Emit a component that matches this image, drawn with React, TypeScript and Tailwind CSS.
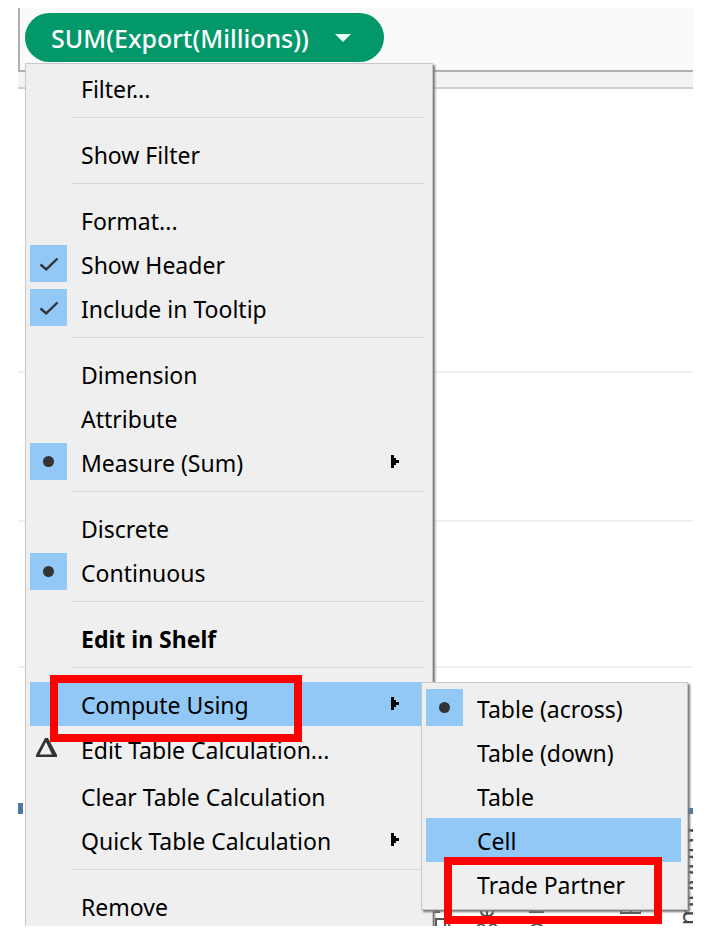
import { ReactNode } from "react";

type Mark = "check" | "dot" | "delta";

function MarkIcon({ mark }: { mark: Mark }) {
  if (mark === "delta") {
    return (
      <svg className="ml-1.5 mt-3 block h-5 w-[22px]" viewBox="0 0 22 20" aria-hidden="true">
        <path d="M0 19V17L9 0H12L21 17V19Z" fill="#333" />
        <path d="M3.5 16.5L10 4L16 16.5Z" fill="#efefef" />
      </svg>
    );
  }
  return (
    <span className="mt-[3px] flex size-[37px] items-center justify-center bg-[#91c8f6]">
      {mark === "dot" ? (
        <span className="size-[11px] rounded-full bg-[#333]" />
      ) : (
        <svg className="block h-[14px] w-5" viewBox="0 0 20 14" fill="none" aria-hidden="true">
          <path d="M1.5 7.5L7.2 12.3L18.5 1.5" stroke="#333" strokeWidth="2.4" />
        </svg>
      )}
    </span>
  );
}

function SubArrow() {
  return (
    <svg className="mr-[22px] mt-[15px] block h-[13px] w-2 shrink-0" viewBox="0 0 8 13" shapeRendering="crispEdges" aria-hidden="true">
      <path d="M0 0H3V3H5V5H8V8H5V10H3V13H0Z" fill="#000" />
    </svg>
  );
}

type ItemProps = {
  label: string;
  mark?: Mark;
  arrow?: boolean;
  active?: boolean;
  bold?: boolean;
  tall?: boolean;
  children?: ReactNode;
};

function Item({ label, mark, arrow, active, bold, tall, children }: ItemProps) {
  return (
    <li className="relative" role="none">
      <button
        type="button"
        role="menuitem"
        className={`flex w-full items-start text-left ${tall ? "h-12" : "h-11"} ${active ? "bg-[#91c8f6]" : ""}`}
      >
        <span className="w-[51px] shrink-0">{mark && <MarkIcon mark={mark} />}</span>
        <span
          className={`grow whitespace-nowrap text-[23px] leading-8 ${tall ? "pt-2" : "pt-[7px]"} ${bold ? "font-bold" : ""}`}
        >
          {label}
        </span>
        {arrow && <SubArrow />}
      </button>
      {children}
    </li>
  );
}

function Separator() {
  return (
    <li role="separator" className="flex h-[22px] items-start pl-[42px] pt-[7px]">
      <span className="-mr-1 h-px grow bg-[#d7d7d7]" />
    </li>
  );
}

function ComputeUsingMenu() {
  return (
    <ul
      role="menu"
      aria-label="Compute Using"
      className="absolute left-[391px] top-0 w-[267px] border border-[#c8c8c8] bg-[#efefef] py-[3px] pl-1 pr-1.5 shadow-[2px_2px_2px_#777]"
    >
      <Item label="Table (across)" mark="dot" />
      <Item label="Table (down)" />
      <Item label="Table" />
      <Item label="Cell" active />
      <Item label="Trade Partner">
        <span className="pointer-events-none absolute -top-[5px] left-[18px] h-[67px] w-[218px] border-8 border-[#fe0000]" />
      </Item>
    </ul>
  );
}

function PillMenu() {
  return (
    <ul
      role="menu"
      aria-label="Measure options"
      className="absolute left-[7px] top-[55px] w-[408px] border border-[#c8c8c8] bg-[#efefef] pb-1 pl-1 pr-[11px] pt-0.5 shadow-[2px_2px_2px_#777]"
    >
      <Item label="Filter..." />
      <Separator />
      <Item label="Show Filter" />
      <Separator />
      <Item label="Format..." />
      <Item label="Show Header" mark="check" />
      <Item label="Include in Tooltip" mark="check" />
      <Separator />
      <Item label="Dimension" />
      <Item label="Attribute" />
      <Item label="Measure (Sum)" mark="dot" arrow />
      <Separator />
      <Item label="Discrete" />
      <Item label="Continuous" mark="dot" />
      <Separator />
      <Item label="Edit in Shelf" bold />
      <Separator />
      <Item label="Compute Using" arrow active>
        <span className="pointer-events-none absolute -top-[7px] left-5 z-10 h-[67px] w-[252px] border-8 border-[#fe0000]" />
        <ComputeUsingMenu />
      </Item>
      <Item label="Edit Table Calculation..." mark="delta" tall />
      <Item label="Clear Table Calculation" />
      <Item label="Quick Table Calculation" arrow />
      <Separator />
      <Item label="Remove" />
    </ul>
  );
}

function AxisLabels() {
  return (
    <div className="flex min-h-0 grow items-start justify-end pt-[13px] text-[#444]">
      {/* Ends of the column headers that show below the open menus */}
      <svg
        className="mr-[34px] mt-[84px] block h-4 w-[210px] shrink-0"
        viewBox="0 0 210 16"
        fill="none"
        stroke="#555"
        strokeWidth="2"
        aria-hidden="true"
      >
        <path d="M0 1H9M2 1V16M5 16V8H14V16M18 16Q18 9 24 9M50 0Q50 5 56 5Q62 5 62 0M56 0V5M46 16Q50 10 54 16M58 16Q62 10 66 16M98 1H113M100 16Q106 10 112 16M190 0V2H200V0M200 2H210V0" />
      </svg>
      <span className="-mr-[6px] shrink-0 rotate-180 whitespace-nowrap text-[26px] leading-6 [writing-mode:vertical-rl]">
        Luxembourg
      </span>
    </div>
  );
}

export default function App() {
  return (
    <main className="flex h-screen flex-col bg-white pb-1 pl-[18px] pr-[27px] pt-2 font-['Noto_Sans','Open_Sans',sans-serif] text-black">
      <div className="relative flex min-h-0 grow flex-col overflow-hidden">
        <div className="h-16 shrink-0 border-b-2 border-l-2 border-[#b0b0b0] bg-[#fafafa] pl-[5px] pt-[5px]">
          <button type="button" className="flex h-[49px] w-[359px] items-center rounded-full bg-[#029869] pl-[26px] text-white">
            <span className="w-[284px] whitespace-nowrap text-left text-[25px] leading-8 font-medium">SUM(Export(Millions))</span>
            <svg className="block h-2 w-4" viewBox="0 0 16 8" aria-hidden="true">
              <path d="M0 0H16L8 8Z" fill="#e8fff4" />
            </svg>
          </button>
        </div>
        <div className="h-[17px] shrink-0 border-b-2 border-[#cfcfcf] bg-[#f3f3f3]" />
        <div className="h-[284px] shrink-0 border-b-2 border-[#f0f0f0]" />
        <div className="h-[149px] shrink-0 border-b-2 border-[#f0f0f0]" />
        <div className="h-[146px] shrink-0 border-b-2 border-[#f0f0f0]" />
        <div className="flex h-[146px] shrink-0 items-end justify-between">
          <span className="h-[11px] w-[5px] bg-[#4e79a7]" />
          <span className="h-1.5 w-[5px] bg-[#4e79a7]" />
        </div>
        <AxisLabels />
        <PillMenu />
      </div>
    </main>
  );
}
